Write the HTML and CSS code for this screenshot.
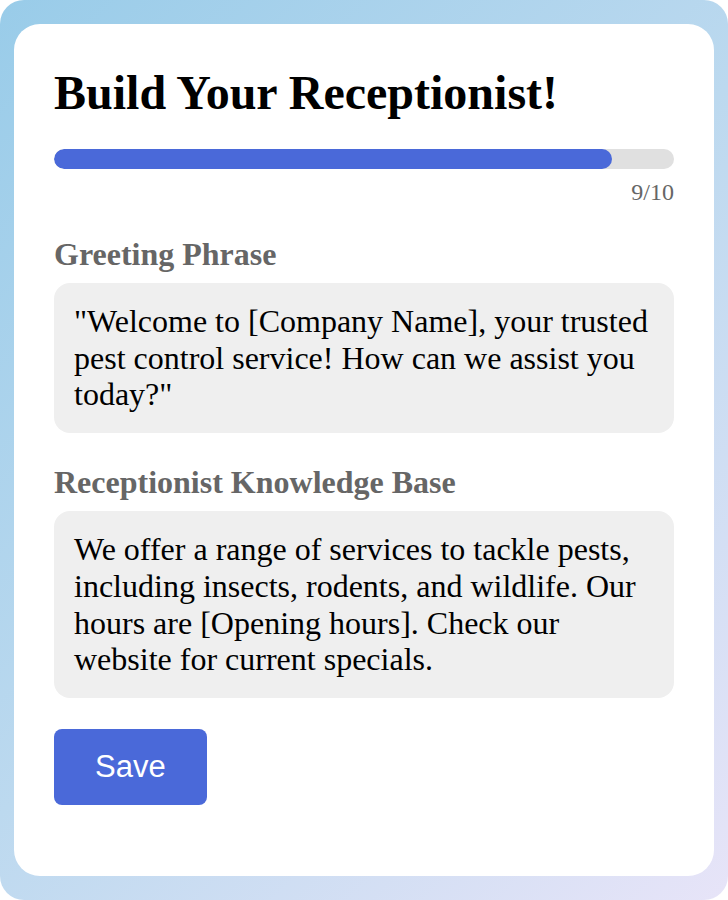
FILE: index.html
```html
<!DOCTYPE html>
<html lang="en">
<head>
<meta charset="utf-8">
<title>Build Your Receptionist!</title>
<link rel="stylesheet" href="styles.css">
</head>
<body>
<div class="frame">
  <div class="card">
    <h1 class="title">Build Your Receptionist!</h1>
    <div class="progress">
      <div class="progress-fill" style="width: 90%"></div>
    </div>
    <div class="progress-text">9/10</div>

    <div class="field">
      <div class="label">Greeting Phrase</div>
      <div class="box">"Welcome to [Company Name], your trusted pest control service! How can we assist you today?"</div>
    </div>

    <div class="field">
      <div class="label">Receptionist Knowledge Base</div>
      <div class="box">We offer a range of services to tackle pests, including insects, rodents, and wildlife. Our hours are [Opening hours]. Check our website for current specials.</div>
    </div>

    <button class="save">Save</button>
  </div>
</div>
</body>
</html>
```

FILE: styles.css
```css
html, body {
  margin: 0;
  padding: 0;
  background: #ffffff;
}

body {
  font-family: "Liberation Serif", "Times New Roman", serif;
}

.frame {
  width: 728px;
  height: 900px;
  box-sizing: border-box;
  padding: 24px 14px;
  border-radius: 24px;
  background: linear-gradient(135deg, #99cce9 0%, #bcd9ef 50%, #e7e4f8 100%);
}

.card {
  height: 100%;
  box-sizing: border-box;
  background: #ffffff;
  border-radius: 26px;
  padding: 41px 40px 40px;
}

.title {
  margin: 0 0 29px;
  font-size: 48px;
  font-weight: bold;
  color: #000;
}

.progress {
  height: 20px;
  border-radius: 10px;
  background: #e0e0e0;
  overflow: hidden;
}

.progress-fill {
  height: 100%;
  border-radius: 10px;
  background: #4a69d9;
}

.progress-text {
  margin-top: 10px;
  text-align: right;
  font-size: 24px;
  color: #666666;
}

.field {
  margin-top: 30px;
}

.field + .field {
  margin-top: 31px;
}

.label {
  font-size: 32px;
  font-weight: bold;
  color: #666666;
  margin-bottom: 10px;
}

.box {
  background: #efefef;
  border-radius: 16px;
  padding: 20px;
  font-size: 32px;
  line-height: 36.7px;
  color: #000;
}

.save {
  display: block;
  margin-top: 31px;
  padding: 20px 41px;
  border: none;
  border-radius: 8px;
  background: #4a69d9;
  color: #ffffff;
  font-family: "Liberation Sans", Arial, sans-serif;
  font-size: 31px;
  line-height: 36px;
}
```
